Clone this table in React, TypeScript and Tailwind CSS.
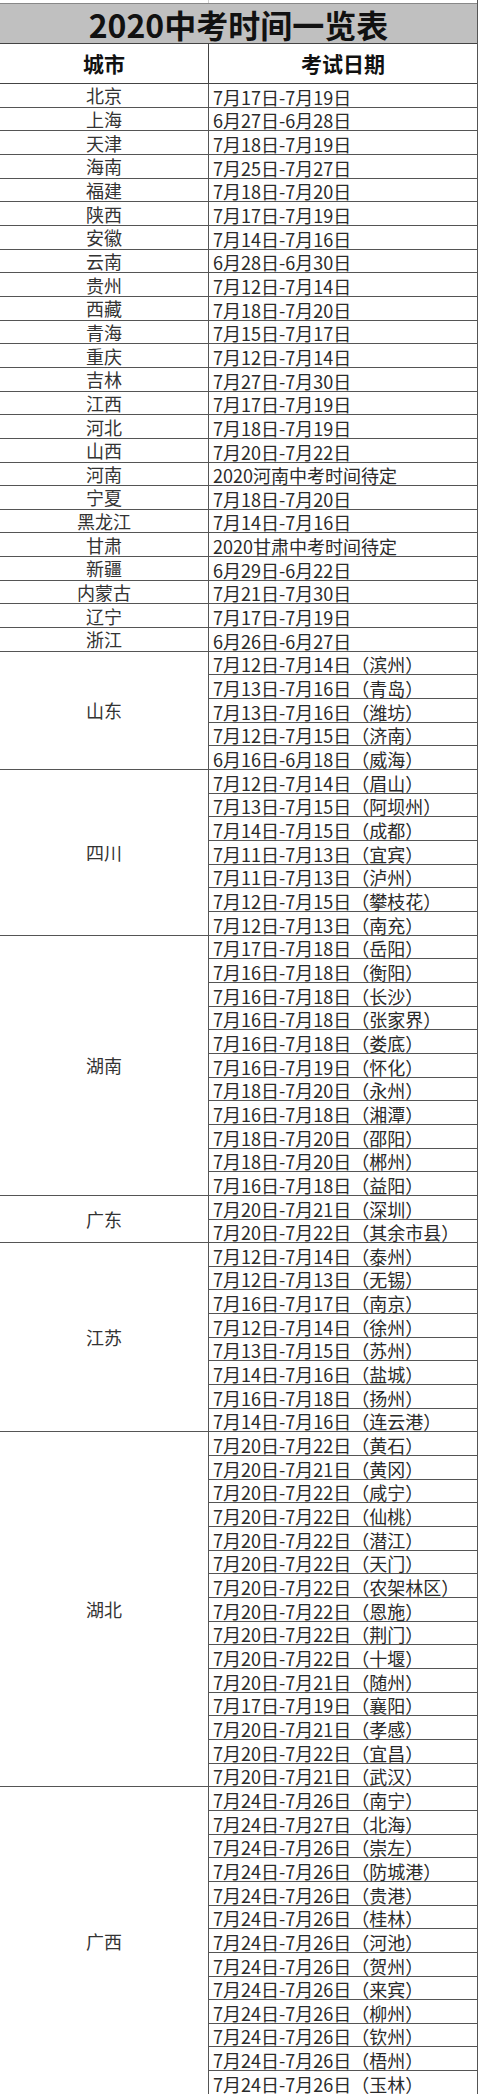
import React from "react";

type Group = { city: string; dates: string[] };

const singles: [string, string][] = [
  ["北京", "7月17日-7月19日"],
  ["上海", "6月27日-6月28日"],
  ["天津", "7月18日-7月19日"],
  ["海南", "7月25日-7月27日"],
  ["福建", "7月18日-7月20日"],
  ["陕西", "7月17日-7月19日"],
  ["安徽", "7月14日-7月16日"],
  ["云南", "6月28日-6月30日"],
  ["贵州", "7月12日-7月14日"],
  ["西藏", "7月18日-7月20日"],
  ["青海", "7月15日-7月17日"],
  ["重庆", "7月12日-7月14日"],
  ["吉林", "7月27日-7月30日"],
  ["江西", "7月17日-7月19日"],
  ["河北", "7月18日-7月19日"],
  ["山西", "7月20日-7月22日"],
  ["河南", "2020河南中考时间待定"],
  ["宁夏", "7月18日-7月20日"],
  ["黑龙江", "7月14日-7月16日"],
  ["甘肃", "2020甘肃中考时间待定"],
  ["新疆", "6月29日-6月22日"],
  ["内蒙古", "7月21日-7月30日"],
  ["辽宁", "7月17日-7月19日"],
  ["浙江", "6月26日-6月27日"],
];

const groups: Group[] = [
  ...singles.map(([city, d]) => ({ city, dates: [d] })),
  {
    city: "山东",
    dates: [
      "7月12日-7月14日（滨州）",
      "7月13日-7月16日（青岛）",
      "7月13日-7月16日（潍坊）",
      "7月12日-7月15日（济南）",
      "6月16日-6月18日（威海）",
    ],
  },
  {
    city: "四川",
    dates: [
      "7月12日-7月14日（眉山）",
      "7月13日-7月15日（阿坝州）",
      "7月14日-7月15日（成都）",
      "7月11日-7月13日（宜宾）",
      "7月11日-7月13日（泸州）",
      "7月12日-7月15日（攀枝花）",
      "7月12日-7月13日（南充）",
    ],
  },
  {
    city: "湖南",
    dates: [
      "7月17日-7月18日（岳阳）",
      "7月16日-7月18日（衡阳）",
      "7月16日-7月18日（长沙）",
      "7月16日-7月18日（张家界）",
      "7月16日-7月18日（娄底）",
      "7月16日-7月19日（怀化）",
      "7月18日-7月20日（永州）",
      "7月16日-7月18日（湘潭）",
      "7月18日-7月20日（邵阳）",
      "7月18日-7月20日（郴州）",
      "7月16日-7月18日（益阳）",
    ],
  },
  {
    city: "广东",
    dates: ["7月20日-7月21日（深圳）", "7月20日-7月22日（其余市县）"],
  },
  {
    city: "江苏",
    dates: [
      "7月12日-7月14日（泰州）",
      "7月12日-7月13日（无锡）",
      "7月16日-7月17日（南京）",
      "7月12日-7月14日（徐州）",
      "7月13日-7月15日（苏州）",
      "7月14日-7月16日（盐城）",
      "7月16日-7月18日（扬州）",
      "7月14日-7月16日（连云港）",
    ],
  },
  {
    city: "湖北",
    dates: [
      "7月20日-7月22日（黄石）",
      "7月20日-7月21日（黄冈）",
      "7月20日-7月22日（咸宁）",
      "7月20日-7月22日（仙桃）",
      "7月20日-7月22日（潜江）",
      "7月20日-7月22日（天门）",
      "7月20日-7月22日（农架林区）",
      "7月20日-7月22日（恩施）",
      "7月20日-7月22日（荆门）",
      "7月20日-7月22日（十堰）",
      "7月20日-7月21日（随州）",
      "7月17日-7月19日（襄阳）",
      "7月20日-7月21日（孝感）",
      "7月20日-7月22日（宜昌）",
      "7月20日-7月21日（武汉）",
    ],
  },
  {
    city: "广西",
    dates: [
      "7月24日-7月26日（南宁）",
      "7月24日-7月27日（北海）",
      "7月24日-7月26日（崇左）",
      "7月24日-7月26日（防城港）",
      "7月24日-7月26日（贵港）",
      "7月24日-7月26日（桂林）",
      "7月24日-7月26日（河池）",
      "7月24日-7月26日（贺州）",
      "7月24日-7月26日（来宾）",
      "7月24日-7月26日（柳州）",
      "7月24日-7月26日（钦州）",
      "7月24日-7月26日（梧州）",
      "7月24日-7月26日（玉林）",
    ],
  },
];

export default function App() {
  return (
    <div
      className="w-[480px] bg-white text-[#2a2a2a]"
      style={{ fontFamily: '"Noto Sans CJK SC", "Noto Sans", sans-serif' }}
    >
      <div className="w-[478px] border-r border-[#555]">
        {/* top strip above title */}
        <div className="flex h-[4px] border-b border-[#888]">
          <div className="w-[209px] border-r border-[#d0d0d0]" />
        </div>

        {/* TITLE */}
        <div className="flex h-[40px] items-end justify-center bg-[#c0c0c0] border-b border-[#444] pb-[1px]">
          <span className="text-[32px] font-bold leading-[36px] text-[#111]">
            2020中考时间一览表
          </span>
        </div>

        {/* HEADER */}
        <div className="grid h-[40px] grid-cols-[209px_1fr] border-b border-[#444]">
          <div className="flex items-center justify-center border-r border-[#444] text-[21px] font-bold text-[#111]">
            城市
          </div>
          <div className="flex items-center justify-center text-[21px] font-bold text-[#111]">
            考试日期
          </div>
        </div>

        {/* ROWS */}
        {groups.map((g) => (
          <div key={g.city} className="grid grid-cols-[209px_1fr]">
            <div className="flex items-center justify-center border-r border-b border-[#555] text-[18px] leading-[20px] text-[#333]">
              {g.city}
            </div>
            <div>
              {g.dates.map((d, i) => (
                <div
                  key={i}
                  className="flex h-[23.67px] items-end border-b border-[#555] pl-[4px] text-[18px] leading-[20px] whitespace-nowrap"
                >
                  {d}
                </div>
              ))}
            </div>
          </div>
        ))}
      </div>
    </div>
  );
}
